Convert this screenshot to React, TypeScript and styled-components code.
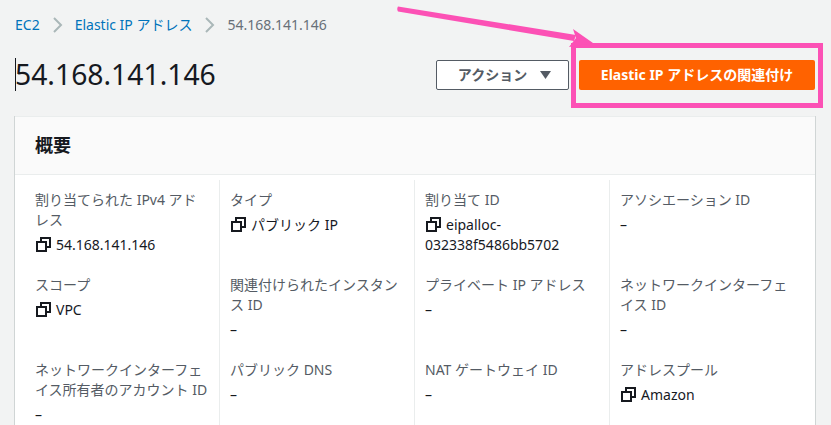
import styled, { createGlobalStyle } from "styled-components";

const GlobalStyle = createGlobalStyle`
  html, body {
    margin: 0;
    padding: 0;
    height: 100%;
    overflow: hidden;
    background: #f2f3f3;
  }
  body {
    font-family: "Noto Sans", "Noto Sans CJK JP", sans-serif;
    color: #16191f;
  }
`;

const Page = styled.div`
  position: relative;
  width: 831px;
  height: 425px;
  overflow: hidden;
  padding: 15px 16px 0 15px;
  box-sizing: border-box;
`;

const Breadcrumbs = styled.nav`
  display: flex;
  align-items: center;
  height: 20px;
  font-size: 14px;
  line-height: 20px;
`;

const Crumb = styled.span<{ $current?: boolean }>`
  color: ${(p) => (p.$current ? "#687078" : "#0073bb")};
`;

const Chevron = styled.svg`
  width: 10px;
  height: 16px;
  margin: 0 12px 0 13px;
  fill: none;
  stroke: #aab7b8;
  stroke-width: 2;
`;

const Header = styled.header`
  display: flex;
  align-items: center;
  justify-content: space-between;
  margin-top: 16px;
  height: 46px;
`;

const Title = styled.h1`
  margin: 0;
  font-size: 28.3px;
  font-weight: 400;
  line-height: 46px;
  position: relative;
`;

const Caret = styled.span`
  position: absolute;
  left: 0;
  top: 7px;
  width: 1px;
  height: 33px;
  background: #16191f;
`;

const Actions = styled.div`
  display: flex;
  gap: 10px;
  align-items: center;
  margin-top: 2px;
`;

const ActionButton = styled.button`
  width: 133px;
  height: 30px;
  box-sizing: border-box;
  border: 1px solid #545b64;
  border-radius: 2px;
  background: #fff;
  color: #545b64;
  font: 700 14px/1 "Noto Sans", "Noto Sans CJK JP", sans-serif;
  display: flex;
  align-items: center;
  justify-content: center;
  gap: 13px;
  padding: 0 0 0 4px;
`;

const PrimaryButton = styled.button`
  width: 236px;
  height: 30px;
  border: 0;
  border-radius: 2px;
  background: #ff6200;
  color: #fff;
  font: 700 14px/1 "Noto Sans", "Noto Sans CJK JP", sans-serif;
`;

const Card = styled.section`
  margin-top: 19px;
  background: #fff;
  border-top: 1px solid #eaeded;
  box-shadow: -1px 0 0 0 #d0d5d5, 1px 0 0 0 #d0d5d5;
`;

const CardHeader = styled.div`
  height: 58px;
  box-sizing: border-box;
  padding: 0 20px 3px;
  display: flex;
  align-items: center;
  background: #fafafa;
  border-bottom: 1px solid #eaeded;
  font-size: 18px;
  font-weight: 700;
`;

const Grid = styled.div`
  display: grid;
  grid-template-columns: repeat(4, 195px);
  padding: 5px 0 0 9px;
`;

const Cell = styled.div<{ $first?: boolean }>`
  height: 85px;
  box-sizing: border-box;
  padding: 10px 11px 0 ${(p) => (p.$first ? 11 : 10)}px;
  border-left: ${(p) => (p.$first ? "0" : "1px solid #eaeded")};
  font-size: 14px;
  line-height: 20px;
`;

const Label = styled.div`
  color: #545b64;
  margin-bottom: 5px;
`;

const Value = styled.div`
  color: #16191f;
  margin-top: 5px;
`;

const CopyIcon = styled.svg`
  display: inline-block;
  width: 15px;
  height: 15px;
  margin: 0 5px 0 1px;
  vertical-align: -2px;
  fill: none;
  stroke: #16191f;
  stroke-width: 2;
`;

const Highlight = styled.div`
  position: absolute;
  left: 571px;
  top: 43px;
  width: 252px;
  height: 65px;
  box-sizing: border-box;
  border: 5px solid #fc51b5;
`;

const Arrow = styled.svg`
  position: absolute;
  left: 390px;
  top: 0;
  width: 220px;
  height: 50px;
`;

type Item = { label: string; value: string; copy?: boolean };

const items: Item[] = [
  { label: "割り当てられた IPv4 アドレス", value: "54.168.141.146", copy: true },
  { label: "タイプ", value: "パブリック IP", copy: true },
  { label: "割り当て ID", value: "eipalloc-032338f5486bb5702", copy: true },
  { label: "アソシエーション ID", value: "–" },
  { label: "スコープ", value: "VPC", copy: true },
  { label: "関連付けられたインスタンス ID", value: "–" },
  { label: "プライベート IP アドレス", value: "–" },
  { label: "ネットワークインターフェイス ID", value: "–" },
  { label: "ネットワークインターフェイス所有者のアカウント ID", value: "–" },
  { label: "パブリック DNS", value: "–" },
  { label: "NAT ゲートウェイ ID", value: "–" },
  { label: "アドレスプール", value: "Amazon", copy: true },
];

function Separator() {
  return (
    <Chevron viewBox="0 0 10 16">
      <path d="M1 1l7 7-7 7" />
    </Chevron>
  );
}

function Copy() {
  return (
    <CopyIcon viewBox="0 0 15 15">
      <path d="M1 5h9v9H1z" />
      <path d="M5 4.5V1h9v9h-3.5" />
    </CopyIcon>
  );
}

export default function App() {
  return (
    <Page>
      <GlobalStyle />
      <Breadcrumbs>
        <Crumb>EC2</Crumb>
        <Separator />
        <Crumb>Elastic IP アドレス</Crumb>
        <Separator />
        <Crumb $current>54.168.141.146</Crumb>
      </Breadcrumbs>
      <Header>
        <Title>
          <Caret />
          54.168.141.146
        </Title>
        <Actions>
          <ActionButton>
            アクション
            <svg width="11" height="8" viewBox="0 0 11 8">
              <path d="M0 0h11L5.5 8z" fill="#545b64" />
            </svg>
          </ActionButton>
          <PrimaryButton>Elastic IP アドレスの関連付け</PrimaryButton>
        </Actions>
      </Header>
      <Card>
        <CardHeader>概要</CardHeader>
        <Grid>
          {items.map((item, i) => (
            <Cell key={item.label} $first={i % 4 === 0}>
              <Label>{item.label}</Label>
              <Value>
                {item.copy && <Copy />}
                {item.value}
              </Value>
            </Cell>
          ))}
        </Grid>
      </Card>
      <Highlight />
      <Arrow viewBox="0 0 220 50">
        <path d="M8 6.5Q6.5 9 8 11.5L184 41L186 35z" fill="#fc51b5" />
        <path d="M183 29L203 43L179 47L186 38z" fill="#fc51b5" />
      </Arrow>
    </Page>
  );
}
